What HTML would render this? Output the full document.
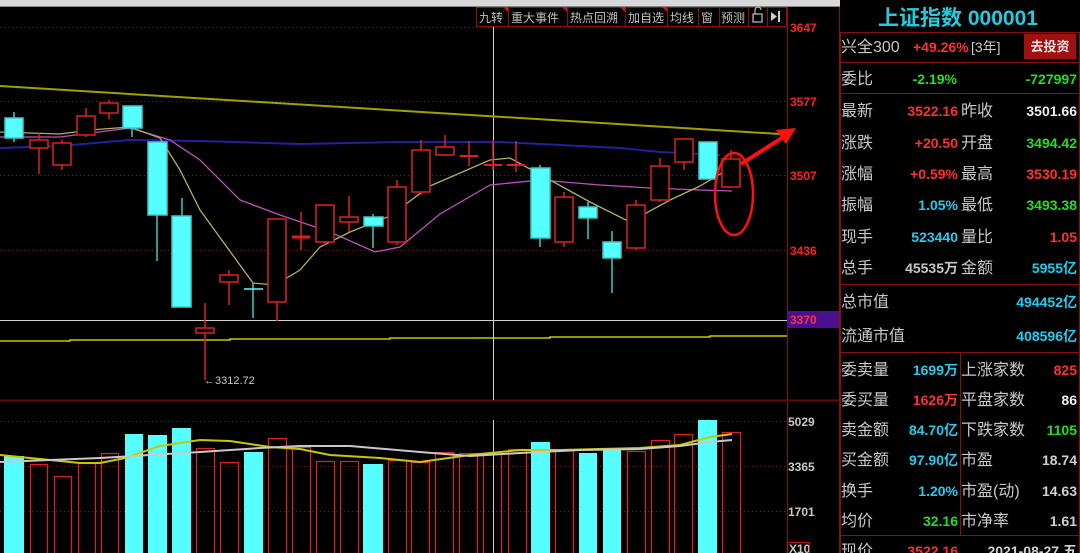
<!DOCTYPE html>
<html><head><meta charset="utf-8"><style>
html,body{margin:0;padding:0;background:#000;width:1080px;height:553px;overflow:hidden}
svg{display:block}
text{font-family:"Liberation Sans","Noto Sans CJK SC",sans-serif}
.lb{fill:#c8c8c8;font-size:16px}
.v{font-size:14px;font-weight:bold;text-anchor:end}
.ax{font-size:12px;font-weight:bold}
.tb{fill:#c0c0c0;font-size:12px}
</style></head><body>
<svg width="1080" height="553" viewBox="0 0 1080 553" xmlns="http://www.w3.org/2000/svg">
<rect width="1080" height="553" fill="#000"/>
<!-- top strip -->
<rect x="0" y="0" width="840" height="7" fill="#d8d8d8"/>
<rect x="0" y="6" width="840" height="1" fill="#888"/>
<!-- grid -->
<g stroke="#8a1010" stroke-dasharray="1,3" stroke-width="1">
<line x1="0" y1="27.5" x2="787" y2="27.5"/><line x1="0" y1="101.5" x2="787" y2="101.5"/>
<line x1="0" y1="175.5" x2="787" y2="175.5"/><line x1="0" y1="250.5" x2="787" y2="250.5"/>
<line x1="0" y1="421.5" x2="787" y2="421.5"/><line x1="0" y1="466.5" x2="787" y2="466.5"/><line x1="0" y1="511.5" x2="787" y2="511.5"/>
</g>
<line x1="787.5" y1="7" x2="787.5" y2="553" stroke="#8a1010"/>
<line x1="0" y1="400.5" x2="840" y2="400.5" stroke="#6a0808" stroke-width="2"/>
<line x1="839.5" y1="7" x2="839.5" y2="553" stroke="#8a1010"/>
<!-- horizontal lines -->
<line x1="0" y1="320.5" x2="787" y2="320.5" stroke="#d0d0d0"/>
<polyline points="0,341 70,341 70,340 230,340 230,339 390,339 390,338 550,338 550,337 710,337 710,336 787,336" fill="none" stroke="#c8c800" stroke-width="1.5"/>
<!-- crosshair -->
<line x1="493.5" y1="27" x2="493.5" y2="400" stroke="#d0d0d0"/>
<line x1="493.5" y1="420" x2="493.5" y2="553" stroke="#d0d0d0"/>
<!-- long MA -->
<line x1="0" y1="86" x2="780" y2="134" stroke="#a0a000" stroke-width="2"/>
<polyline points="0,148 60,146 130,140 200,141 300,144 400,142 500,142 560,145 620,148 660,152 700,154 720,155" fill="none" stroke="#2020a0" stroke-width="2"/>
<polyline points="0,137 60,137 130,128 170,140 200,160 240,200 280,215 330,232 375,252 400,247 440,214 490,185 540,180 600,185 650,188 700,190 732,191" fill="none" stroke="#c050c0" stroke-width="1.3"/>
<polyline points="0,132 60,134 90,130 130,127 160,138 180,170 200,210 253,283 275,285 300,270 320,247 350,232 390,216 430,186 490,160 510,158 550,180 590,202 630,222 670,200 700,186 732,167" fill="none" stroke="#b0b060" stroke-width="1.3"/>
<!-- candles -->
<g stroke="#e02020" stroke-width="1.5" fill="none">
<line x1="39" y1="133" x2="39" y2="174"/><rect x="30" y="140" width="18" height="8" fill="#000"/>
<line x1="62" y1="140" x2="62" y2="170"/><rect x="53" y="143" width="18" height="22" fill="#000"/>
<line x1="86" y1="108" x2="86" y2="137"/><rect x="77" y="116" width="18" height="19" fill="#000"/>
<line x1="109" y1="100" x2="109" y2="119"/><rect x="100" y="103" width="18" height="10" fill="#000"/>
<line x1="205" y1="303" x2="205" y2="380"/><rect x="196" y="328" width="18" height="5" fill="#000"/>
<line x1="229" y1="270" x2="229" y2="305"/><rect x="220" y="275" width="18" height="7" fill="#000"/>
<line x1="277" y1="219" x2="277" y2="321"/><rect x="268" y="219" width="18" height="83" fill="#000"/>
<line x1="301" y1="212" x2="301" y2="250"/><line x1="292" y1="237" x2="310" y2="237" stroke-width="3"/>
<line x1="325" y1="205" x2="325" y2="245"/><rect x="316" y="205" width="18" height="37" fill="#000"/>
<line x1="349" y1="196" x2="349" y2="232"/><rect x="340" y="217" width="18" height="5" fill="#000"/>
<line x1="397" y1="180" x2="397" y2="245"/><rect x="388" y="187" width="18" height="55" fill="#000"/>
<line x1="421" y1="140" x2="421" y2="195"/><rect x="412" y="150" width="18" height="42" fill="#000"/>
<line x1="445" y1="135" x2="445" y2="156"/><rect x="436" y="147" width="18" height="8" fill="#000"/>
<line x1="469" y1="141" x2="469" y2="166"/><line x1="460" y1="156" x2="478" y2="156" stroke-width="2"/>
<line x1="493" y1="140" x2="493" y2="170"/><line x1="484" y1="165" x2="502" y2="165" stroke-width="2"/>
<line x1="516" y1="141" x2="516" y2="172"/><line x1="507" y1="165" x2="525" y2="165" stroke-width="2"/>
<line x1="564" y1="192" x2="564" y2="247"/><rect x="555" y="197" width="18" height="45" fill="#000"/>
<line x1="636" y1="200" x2="636" y2="250"/><rect x="627" y="205" width="18" height="43" fill="#000"/>
<line x1="660" y1="158" x2="660" y2="202"/><rect x="651" y="166" width="18" height="34" fill="#000"/>
<line x1="684" y1="139" x2="684" y2="170"/><rect x="675" y="139" width="18" height="23" fill="#000"/>
<line x1="731" y1="150" x2="731" y2="188"/><rect x="722" y="159" width="18" height="28" fill="#000"/>
</g>
<g stroke="#40c8c8" stroke-width="1.5" fill="#55ffff">
<line x1="14" y1="112" x2="14" y2="142"/><rect x="5" y="118" width="18" height="20"/>
<line x1="132" y1="128" x2="132" y2="137"/><rect x="123" y="106" width="19" height="22"/>
<line x1="157" y1="142" x2="157" y2="261"/><rect x="148" y="142" width="19" height="73"/>
<line x1="182" y1="198" x2="182" y2="307"/><rect x="172" y="216" width="19" height="91"/>
<line x1="253" y1="283" x2="253" y2="318"/><line x1="244" y1="289" x2="263" y2="289" stroke="#55ffff"/>
<line x1="373" y1="214" x2="373" y2="248"/><rect x="364" y="217" width="19" height="9"/>
<line x1="540" y1="165" x2="540" y2="247"/><rect x="531" y="168" width="19" height="70"/>
<line x1="588" y1="202" x2="588" y2="239"/><rect x="579" y="207" width="18" height="11"/>
<line x1="612" y1="231" x2="612" y2="293"/><rect x="603" y="242" width="18" height="16"/>
<rect x="699" y="142" width="18" height="37"/>
</g>
<text x="204" y="384" fill="#c8c8c8" font-size="11">←3312.72</text>
<!-- annotations -->
<ellipse cx="734" cy="194" rx="19" ry="41" fill="none" stroke="#ff1010" stroke-width="2.5"/>
<line x1="741" y1="164" x2="785" y2="136" stroke="#ff1010" stroke-width="4"/>
<polygon points="796,128 776,130 786,144" fill="#ff1010"/>
<!-- toolbar -->
<g>
<rect x="476.5" y="7.5" width="310" height="19" fill="#000" stroke="#8a1010"/>
<g stroke="#8a1010"><line x1="508.5" y1="7" x2="508.5" y2="26"/><line x1="567.5" y1="7" x2="567.5" y2="26"/><line x1="625.5" y1="7" x2="625.5" y2="26"/><line x1="667.5" y1="7" x2="667.5" y2="26"/><line x1="698.5" y1="7" x2="698.5" y2="26"/><line x1="719.5" y1="7" x2="719.5" y2="26"/><line x1="748.5" y1="7" x2="748.5" y2="26"/><line x1="767.5" y1="7" x2="767.5" y2="26"/></g>
<g fill="#e01010"><polygon points="503,7 508,7 508,12"/><polygon points="562,7 567,7 567,12"/><polygon points="620,7 625,7 625,12"/><polygon points="662,7 667,7 667,12"/></g>
<text x="479" y="22" class="tb">九转</text><text x="511" y="22" class="tb">重大事件</text><text x="570" y="22" class="tb">热点回溯</text><text x="628" y="22" class="tb">加自选</text><text x="670" y="22" class="tb">均线</text><text x="701" y="22" class="tb">窗</text><text x="721" y="22" class="tb">预测</text>
<rect x="753" y="14" width="9" height="8" fill="none" stroke="#c0c0c0" stroke-width="1.2"/><path d="M755 14 V10 a3 3 0 0 1 6 0" fill="none" stroke="#c0c0c0" stroke-width="1.2"/>
<polygon points="771,12 777,16.5 771,21" fill="#d0d0d0"/><rect x="778" y="11" width="2" height="11" fill="#d0d0d0"/>
</g>
<!-- price axis -->
<g class="ax" fill="#ff2020"><text x="790" y="32" class="ax">3647</text><text x="790" y="106" class="ax">3577</text><text x="790" y="180" class="ax">3507</text><text x="790" y="255" class="ax">3436</text></g>
<rect x="787" y="311" width="52" height="17" fill="#4a1090"/>
<text x="790" y="324" class="ax" fill="#ff3040">3370</text>
<g fill="#c8c8c8"><text x="788" y="426" class="ax">5029</text><text x="788" y="471" class="ax">3365</text><text x="788" y="516" class="ax">1701</text><text x="789" y="553" class="ax">X10</text></g>
<rect x="787.5" y="542.5" width="22" height="12" fill="none" stroke="#c01010"/>
<!-- volume bars -->
<g fill="#55ffff">
<rect x="4" y="456" width="20" height="97"/><rect x="125" y="434" width="18" height="119"/><rect x="148" y="435" width="19" height="118"/><rect x="172" y="428" width="19" height="125"/><rect x="244" y="452" width="19" height="101"/><rect x="363" y="464" width="20" height="89"/><rect x="531" y="442" width="19" height="111"/><rect x="579" y="453" width="18" height="100"/><rect x="603" y="450" width="18" height="103"/><rect x="698" y="420" width="19" height="133"/>
</g>
<g fill="none" stroke="#e02020" stroke-width="1.2">
<rect x="30.5" y="464.5" width="17" height="90"/><rect x="54.5" y="476.5" width="17" height="80"/><rect x="78.5" y="463.5" width="17" height="90"/><rect x="101.5" y="453.5" width="17" height="100"/><rect x="196.5" y="448.5" width="18" height="105"/><rect x="220.5" y="462.5" width="18" height="91"/><rect x="268.5" y="438.5" width="18" height="115"/><rect x="292.5" y="447.5" width="18" height="106"/><rect x="316.5" y="461.5" width="18" height="92"/><rect x="340.5" y="461.5" width="18" height="92"/><rect x="388.5" y="460.5" width="18" height="93"/><rect x="411.5" y="462.5" width="18" height="91"/><rect x="435.5" y="452.5" width="18" height="101"/><rect x="459.5" y="453.5" width="18" height="100"/><rect x="483.5" y="454.5" width="18" height="99"/><rect x="508.5" y="449.5" width="18" height="104"/><rect x="555.5" y="450.5" width="18" height="103"/><rect x="627.5" y="451.5" width="18" height="102"/><rect x="651.5" y="440.5" width="18" height="113"/><rect x="674.5" y="434.5" width="18" height="119"/><rect x="722.5" y="432.5" width="18" height="121"/>
</g>
<polyline points="0,455 40,459 80,463 100,463 125,458 160,446 200,440 230,441 270,447 300,449 330,455 380,458 420,462 470,455 520,450 560,450 640,448 680,445 710,437 732,434" fill="none" stroke="#c8c800" stroke-width="2"/>
<polyline points="0,462 50,460 100,458 150,455 200,452 260,448 300,446 350,446 420,452 470,456 520,453 580,450 640,449 680,446 710,442 732,440" fill="none" stroke="#c8c8c8" stroke-width="2"/>
<!-- right panel -->
<text x="958" y="25" fill="#22ccdd" font-size="21" font-weight="bold" text-anchor="middle">上证指数 000001</text>
<rect x="840.5" y="32.5" width="239" height="530" fill="none" stroke="#8a1010"/>
<g stroke="#8a1010"><line x1="840" y1="62.5" x2="1080" y2="62.5"/><line x1="840" y1="93.5" x2="1080" y2="93.5"/><line x1="840" y1="284.5" x2="1080" y2="284.5"/><line x1="840" y1="352.5" x2="1080" y2="352.5"/><line x1="840" y1="535.5" x2="1080" y2="535.5"/><line x1="960.5" y1="352" x2="960.5" y2="535"/></g>
<text x="841" y="52" class="lb">兴全300</text>
<text x="913" y="52" fill="#ff3030" font-size="14" font-weight="bold">+49.26%</text><text x="971" y="52" fill="#c8c8c8" font-size="14">[3年]</text>
<rect x="1024" y="34" width="52" height="25" fill="#a01010"/><text x="1050" y="51" fill="#f0e0e0" font-size="13" font-weight="bold" text-anchor="middle">去投资</text>
<text x="841" y="84" class="lb">委比</text><text x="957" y="84" class="v" fill="#20e020">-2.19%</text><text x="1077" y="84" class="v" fill="#20e020">-727997</text>
<g class="lb">
<text x="841" y="116">最新</text><text x="841" y="148">涨跌</text><text x="841" y="179">涨幅</text><text x="841" y="210">振幅</text><text x="841" y="242">现手</text><text x="841" y="273">总手</text>
<text x="961" y="116">昨收</text><text x="961" y="148">开盘</text><text x="961" y="179">最高</text><text x="961" y="210">最低</text><text x="961" y="242">量比</text><text x="961" y="273">金额</text>
<text x="841" y="307">总市值</text><text x="841" y="341">流通市值</text>
<text x="841" y="375">委卖量</text><text x="841" y="405">委买量</text><text x="841" y="435">卖金额</text><text x="841" y="465">买金额</text><text x="841" y="496">换手</text><text x="841" y="526">均价</text>
<text x="961" y="375">上涨家数</text><text x="961" y="405">平盘家数</text><text x="961" y="435">下跌家数</text><text x="961" y="465">市盈</text><text x="961" y="496">市盈(动)</text><text x="961" y="526">市净率</text>
<text x="841" y="556">现价</text>
</g>
<g class="v">
<text x="958" y="116" fill="#ff3030">3522.16</text><text x="1077" y="116" fill="#f0f0f0">3501.66</text>
<text x="958" y="148" fill="#ff3030">+20.50</text><text x="1077" y="148" fill="#20e020">3494.42</text>
<text x="958" y="179" fill="#ff3030">+0.59%</text><text x="1077" y="179" fill="#ff3030">3530.19</text>
<text x="958" y="210" fill="#22ccee">1.05%</text><text x="1077" y="210" fill="#20e020">3493.38</text>
<text x="958" y="242" fill="#22ccee">523440</text><text x="1077" y="242" fill="#ff3030">1.05</text>
<text x="958" y="273" fill="#c8c8c8">45535万</text><text x="1077" y="273" fill="#22ccee">5955亿</text>
<text x="1077" y="307" fill="#22ccee">494452亿</text><text x="1077" y="341" fill="#22ccee">408596亿</text>
<text x="958" y="375" fill="#22ccee">1699万</text><text x="1077" y="375" fill="#ff3030">825</text>
<text x="958" y="405" fill="#ff3030">1626万</text><text x="1077" y="405" fill="#f0f0f0">86</text>
<text x="958" y="435" fill="#22ccee">84.70亿</text><text x="1077" y="435" fill="#20e020">1105</text>
<text x="958" y="465" fill="#22ccee">97.90亿</text><text x="1077" y="465" fill="#d0d0d0">18.74</text>
<text x="958" y="496" fill="#22ccee">1.20%</text><text x="1077" y="496" fill="#d0d0d0">14.63</text>
<text x="958" y="526" fill="#20e020">32.16</text><text x="1077" y="526" fill="#d0d0d0">1.61</text>
<text x="958" y="556" fill="#ff3030">3522.16</text><text x="1077" y="556" fill="#d0d0d0">2021-08-27 五</text>
</g>
</svg>
</body></html>
